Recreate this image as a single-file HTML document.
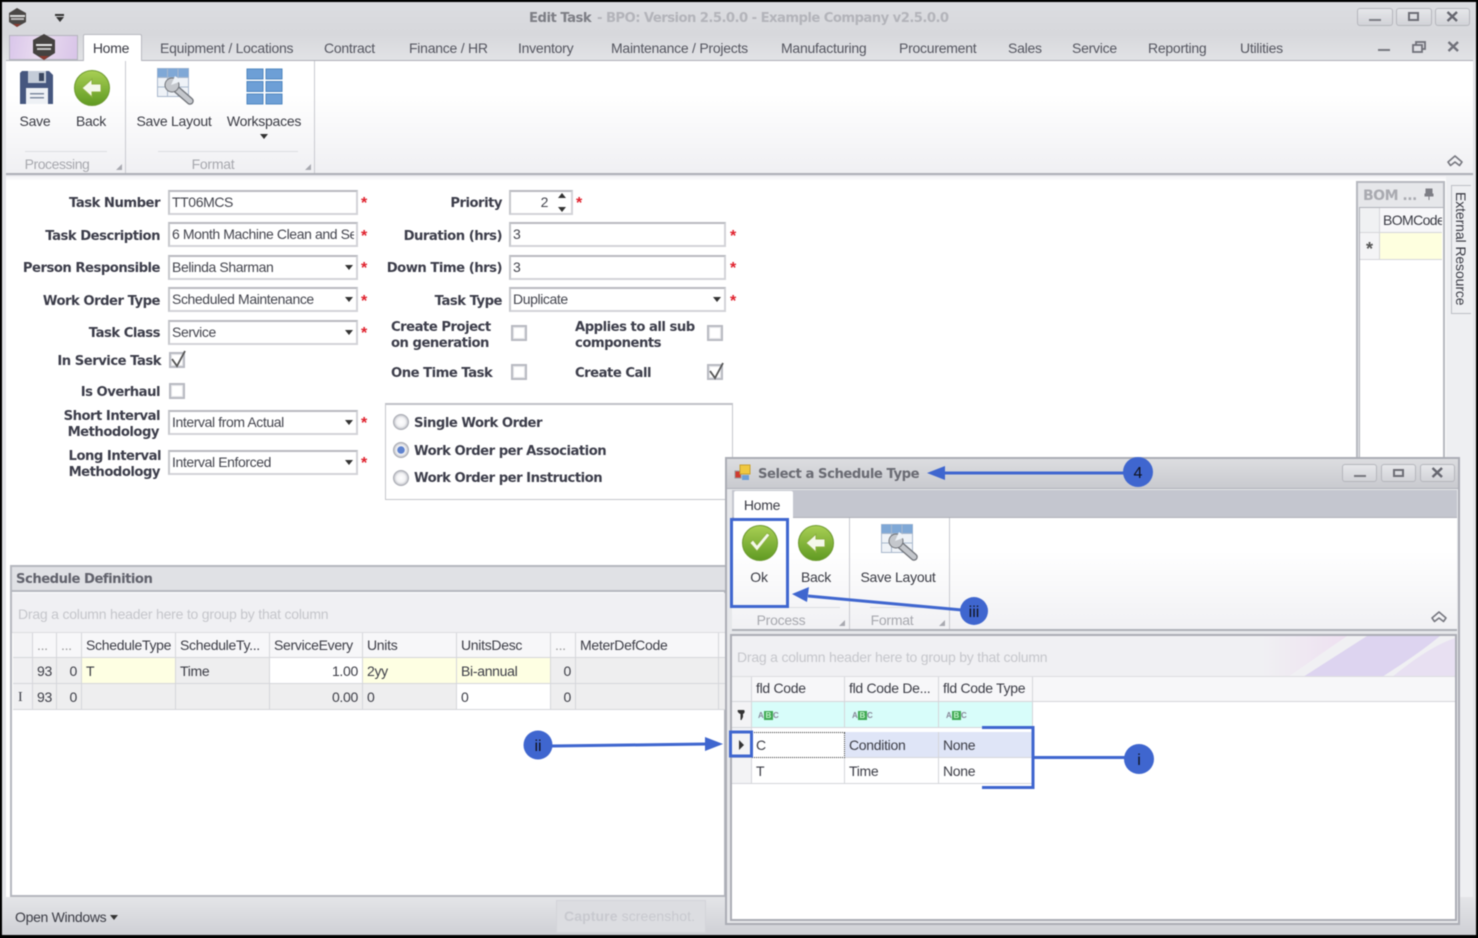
<!DOCTYPE html>
<html><head><meta charset="utf-8"><title>Edit Task</title>
<style>
html,body{margin:0;padding:0;background:#000;width:1478px;height:938px;overflow:hidden}
#a{position:absolute;left:0;top:0;width:1478px;height:938px;overflow:hidden;background:#000;filter:blur(.45px);font-family:"Liberation Sans",sans-serif;font-size:14px;color:#3a3b44}
#a div{position:absolute;box-sizing:border-box}
.t{white-space:nowrap;line-height:16px;height:16px;letter-spacing:-.25px}
.c{text-align:center;transform:translateX(-50%)}
.l{font-family:"DejaVu Sans",sans-serif;font-weight:bold;font-size:13.2px;letter-spacing:-.5px;color:#3c3d4a;text-align:right;white-space:nowrap;line-height:16px;height:16px;margin-top:3px}
.b{font-family:"DejaVu Sans",sans-serif;font-weight:bold;font-size:13.2px;letter-spacing:-.5px;color:#3c3d4a;white-space:nowrap;line-height:16px;height:16px;margin-top:3px}
.i{background:#fff;border:2px solid #d2d3d8;border-top-color:#b9bac0;border-left-color:#c6c7cc;line-height:20px;padding-left:2px;white-space:nowrap;overflow:hidden;letter-spacing:-.4px;color:#44454e}
.d:after{content:"";position:absolute;right:3px;top:8px;border:4.5px solid transparent;border-top:5px solid #333;border-bottom:0}
.s{color:#e0202c;font-size:16px;font-weight:bold;line-height:16px;height:16px;width:10px}
.k{width:16px;height:16px;background:#fff;border:2px solid #b8bac2;box-shadow:inset 0 0 0 1px #e6e7ea}
.g{color:#a7a8ae}
.wb{border:1px solid #b5b6bc;border-radius:3px;background:linear-gradient(#e6e7ea,#d2d3d8)}
.cell{border-right:1px solid #d5d6da;border-bottom:1px solid #d5d6da;line-height:24px;padding:0 4px;white-space:nowrap;overflow:hidden;letter-spacing:-.3px;color:#3c3d46}
svg{position:absolute;overflow:visible}
</style></head><body><div id="a">

<!-- window base -->
<div style="left:2px;top:2px;width:1474px;height:933px;background:#e4e5e9"></div>
<div style="left:2px;top:2px;width:1474px;height:32px;background:linear-gradient(#dcdde1,#d7d8dc)"></div>
<div style="left:2px;top:34px;width:1474px;height:27px;background:linear-gradient(#d7d8dc,#e2e3e6)"></div>
<div style="left:6px;top:60px;width:1467px;height:1px;background:#aeb0b8"></div>

<svg style="left:0;top:0" width="40" height="40" viewBox="0 0 40 40">
<polygon points="17,8 26,13 26,22 17,27 9,22 9,13" fill="#4a4745"/><rect x="10" y="15" width="15" height="2" fill="#ddd"/><rect x="11" y="18" width="13" height="2" fill="#bbb"/><polygon points="13,24 21,24 17,27" fill="#8a3a30"/>
</svg>
<div style="left:55px;top:14px;width:9px;height:2px;background:#333"></div>
<div style="left:56px;top:17px;border:4px solid transparent;border-top:5px solid #333;border-bottom:0"></div>

<div class="t b" style="left:529px;top:8px;color:#7d7e85">Edit Task</div>
<div class="t b g" style="left:597px;top:8px;color:#b3b4ba;letter-spacing:-.56px">- BPO: Version 2.5.0.0 - Example Company v2.5.0.0</div>

<!-- window buttons -->
<div class="wb" style="left:1357px;top:8px;width:36px;height:18px"></div>
<div style="left:1369px;top:19px;width:12px;height:2px;background:#7d7e85"></div>
<div class="wb" style="left:1396px;top:8px;width:36px;height:18px"></div>
<div style="left:1408px;top:12px;width:11px;height:9px;border:2px solid #6d6e76"></div>
<div class="wb" style="left:1435px;top:8px;width:35px;height:18px"></div>
<svg style="left:1446px;top:11px" width="13" height="11"><path d="M1.5 1L11 10M11 1L1.5 10" stroke="#666770" stroke-width="2.4" fill="none"/></svg>

<!-- tabs -->
<div style="left:9px;top:35px;width:69px;height:25px;border:1px solid #b4b5bd;background:linear-gradient(100deg,#d9c6ea,#eadcf0 45%,#d8c4e8)"></div>
<svg style="left:30px;top:33px" width="28" height="28"><polygon points="14,1 25,7 25,20 14,27 3,20 3,7" fill="#454240"/><rect x="6" y="11" width="16" height="2" fill="#e8e8e8"/><rect x="7" y="15" width="14" height="2" fill="#c9c9c9"/><polygon points="9,23 19,23 14,27" fill="#8a3a30"/></svg>
<div style="left:83px;top:34px;width:59px;height:28px;background:#fff;border:1px solid #b8b9c0;border-bottom:0;border-radius:2px 2px 0 0"></div>
<div class="t c" style="left:111px;top:40px">Home</div>
<div class="t" style="left:160px;top:40px;color:#555660">Equipment / Locations</div>
<div class="t" style="left:324px;top:40px;color:#555660">Contract</div>
<div class="t" style="left:409px;top:40px;color:#555660">Finance / HR</div>
<div class="t" style="left:518px;top:40px;color:#555660">Inventory</div>
<div class="t" style="left:611px;top:40px;color:#555660">Maintenance / Projects</div>
<div class="t" style="left:781px;top:40px;color:#555660">Manufacturing</div>
<div class="t" style="left:899px;top:40px;color:#555660">Procurement</div>
<div class="t" style="left:1008px;top:40px;color:#555660">Sales</div>
<div class="t" style="left:1072px;top:40px;color:#555660">Service</div>
<div class="t" style="left:1148px;top:40px;color:#555660">Reporting</div>
<div class="t" style="left:1240px;top:40px;color:#555660">Utilities</div>
<div style="left:1378px;top:49px;width:12px;height:2px;background:#77787f"></div>
<svg style="left:1412px;top:41px" width="14" height="12"><rect x="4" y="1" width="9" height="7" fill="none" stroke="#70717a" stroke-width="1.8"/><rect x="1" y="4" width="9" height="7" fill="#dfe0e4" stroke="#70717a" stroke-width="1.8"/></svg>
<svg style="left:1447px;top:41px" width="13" height="11"><path d="M1.5 1L11 10M11 1L1.5 10" stroke="#70717a" stroke-width="2.4" fill="none"/></svg>

<!-- ribbon -->
<div style="left:6px;top:61px;width:1467px;height:114px;background:linear-gradient(#fff,#fff 30%,#f0f0f3);border-bottom:2px solid #aeb0b7"></div>
<div style="left:125px;top:61px;width:1px;height:112px;background:#c9cad0"></div>
<div style="left:314px;top:61px;width:1px;height:112px;background:#c9cad0"></div>
<div style="left:25px;top:151px;width:82px;height:1px;background:#dcdde1"></div>
<div style="left:158px;top:151px;width:140px;height:1px;background:#dcdde1"></div>
<svg style="left:20px;top:71px" width="33" height="34"><path d="M2 0H29L33 4V33H0V2Z" fill="#46577f"/><path d="M8 0H26V12H8Z" fill="#c4ccd8"/><rect x="19" y="2" width="5" height="8" fill="#3a4660"/><rect x="6" y="17" width="22" height="16" fill="#eef1f5"/><rect x="10" y="22" width="14" height="1.5" fill="#7f8aa0"/><rect x="10" y="26" width="14" height="1.5" fill="#7f8aa0"/></svg>
<svg style="left:74px;top:70px" width="36" height="36"><defs><linearGradient id="gr" x1="0" y1="0" x2="0" y2="1"><stop offset="0" stop-color="#a9cf54"/><stop offset="1" stop-color="#5f9a22"/></linearGradient></defs><circle cx="18" cy="18" r="17.5" fill="url(#gr)" stroke="#6d9a30"/><path d="M8 18L18 9V14H27V22H18V27Z" fill="#f4f8ea" stroke="#8bb040"/></svg>
<svg style="left:157px;top:68px" width="37" height="38"><rect x=".5" y=".5" width="31" height="28" fill="#eef2f7" stroke="#a9b8cc"/><rect x=".5" y=".5" width="31" height="9" fill="#7fa8d6"/><path d="M10.500 1V28M21 1V28M1 9.500H31M1 19H31" stroke="#a9b8cc" fill="none"/><path d="M18 20L33 33" stroke="#6f7278" stroke-width="7.500" stroke-linecap="round"/><path d="M18 20L33 33" stroke="#c4c7cc" stroke-width="5" stroke-linecap="round"/><circle cx="15" cy="17" r="7" fill="#c4c7cc" stroke="#6f7278"/><path d="M14 17L18 8L25 13Z" fill="#eef2f7"/></svg>
<svg style="left:246px;top:68px" width="38" height="38"><g fill="#6d9fd6" stroke="#4f86c0"><rect x="1" y="1" width="16" height="10"/><rect x="20" y="1" width="16" height="10"/><rect x="1" y="13.500" width="16" height="10"/><rect x="20" y="13.500" width="16" height="10"/><rect x="1" y="26" width="16" height="10"/><rect x="20" y="26" width="16" height="10"/></g></svg>
<div class="t c" style="left:35px;top:113px">Save</div>
<div class="t c" style="left:91px;top:113px">Back</div>
<div class="t c" style="left:174px;top:113px">Save Layout</div>
<div class="t c" style="left:264px;top:113px">Workspaces</div>
<div style="left:260px;top:134px;border:4px solid transparent;border-top:5px solid #333;border-bottom:0"></div>
<div class="t c" style="left:57px;top:156px;color:#a7a8ae;letter-spacing:-.45px">Processing</div>
<div class="t c" style="left:213px;top:156px;color:#a7a8ae">Format</div>
<svg style="left:115px;top:163px" width="8" height="8"><path d="M7 1V7H1Z" fill="#a8a9b0"/></svg>
<svg style="left:304px;top:163px" width="8" height="8"><path d="M7 1V7H1Z" fill="#a8a9b0"/></svg>
<svg style="left:1446px;top:154px" width="18" height="14"><path d="M2 8L9 2L16 8L13.500 11.500L9 8L4.500 11.500Z" fill="none" stroke="#777880" stroke-width="1.600" stroke-linejoin="round"/></svg>

<!-- form area -->
<div style="left:6px;top:176px;width:1467px;height:721px;background:#fff"></div>
<div style="left:1446px;top:176px;width:27px;height:721px;background:#eeeff2"></div>
<div style="left:6px;top:176px;width:1440px;height:5px;background:linear-gradient(#f2f2f5,#fff)"></div>

<!-- left labels -->
<div class="l" style="left:0;width:160px;top:193px">Task Number</div>
<div class="l" style="left:0;width:160px;top:226px">Task Description</div>
<div class="l" style="left:0;width:160px;top:258px">Person Responsible</div>
<div class="l" style="left:0;width:160px;top:291px">Work Order Type</div>
<div class="l" style="left:0;width:160px;top:323px">Task Class</div>
<div class="l" style="left:0;width:161px;top:351px">In Service Task</div>
<div class="l" style="left:0;width:160px;top:382px">Is Overhaul</div>
<div class="l" style="left:0;width:160px;top:406px">Short Interval</div>
<div class="l" style="left:0;width:159px;top:422px">Methodology</div>
<div class="l" style="left:0;width:161px;top:446px">Long Interval</div>
<div class="l" style="left:0;width:160px;top:462px">Methodology</div>

<div class="i" style="left:168px;top:190px;width:190px;height:25px">TT06MCS</div>
<div class="i" style="left:168px;top:222px;width:190px;height:25px"><span style="display:block;width:182px;overflow:hidden">6 Month Machine Clean and Service</span></div>
<div class="i d" style="left:168px;top:255px;width:190px;height:25px">Belinda Sharman</div>
<div class="i d" style="left:168px;top:287px;width:190px;height:25px">Scheduled Maintenance</div>
<div class="i d" style="left:168px;top:320px;width:190px;height:25px">Service</div>
<div class="i d" style="left:168px;top:410px;width:190px;height:25px">Interval from Actual</div>
<div class="i d" style="left:168px;top:450px;width:190px;height:25px">Interval Enforced</div>
<div class="s" style="left:361px;top:196px">*</div>
<div class="s" style="left:361px;top:229px">*</div>
<div class="s" style="left:361px;top:261px">*</div>
<div class="s" style="left:361px;top:294px">*</div>
<div class="s" style="left:361px;top:326px">*</div>
<div class="s" style="left:361px;top:416px">*</div>
<div class="s" style="left:361px;top:456px">*</div>

<div class="k" style="left:169px;top:352px"></div>
<svg style="left:169px;top:349px" width="18" height="20"><path d="M3 10L8 17L16 2" fill="none" stroke="#555" stroke-width="1.800"/></svg>
<div class="k" style="left:169px;top:383px"></div>

<!-- right labels -->
<div class="l" style="left:380px;width:122px;top:193px">Priority</div>
<div class="l" style="left:380px;width:122px;top:226px">Duration (hrs)</div>
<div class="l" style="left:380px;width:122px;top:258px">Down Time (hrs)</div>
<div class="l" style="left:380px;width:122px;top:291px">Task Type</div>
<div class="b" style="left:391px;top:317px">Create Project</div>
<div class="b" style="left:391px;top:333px">on generation</div>
<div class="b" style="left:575px;top:317px">Applies to all sub</div>
<div class="b" style="left:575px;top:333px">components</div>
<div class="b" style="left:391px;top:363px">One Time Task</div>
<div class="b" style="left:575px;top:363px">Create Call</div>

<div class="i" style="left:509px;top:190px;width:64px;height:25px;text-align:right;padding-right:23px">2</div>
<div style="left:558px;top:193px;border:4.500px solid transparent;border-bottom:5px solid #333;border-top:0"></div>
<div style="left:558px;top:207px;border:4.500px solid transparent;border-top:5px solid #333;border-bottom:0"></div>
<div class="s" style="left:576px;top:196px">*</div>
<div class="i" style="left:509px;top:222px;width:217px;height:25px">3</div>
<div class="i" style="left:509px;top:255px;width:217px;height:25px">3</div>
<div class="i d" style="left:509px;top:287px;width:217px;height:25px">Duplicate</div>
<div class="s" style="left:730px;top:229px">*</div>
<div class="s" style="left:730px;top:261px">*</div>
<div class="s" style="left:730px;top:294px">*</div>

<div class="k" style="left:511px;top:325px"></div>
<div class="k" style="left:707px;top:325px"></div>
<div class="k" style="left:511px;top:364px"></div>
<div class="k" style="left:707px;top:364px"></div>
<svg style="left:707px;top:361px" width="18" height="20"><path d="M3 10L8 17L16 2" fill="none" stroke="#555" stroke-width="1.800"/></svg>

<div style="left:385px;top:403px;width:348px;height:97px;border:1px solid #c5c6cb;border-top:2px solid #c0c1c7;background:#fff"></div>
<svg style="left:392px;top:413px" width="18" height="74"><defs><radialGradient id="rd"><stop offset="0" stop-color="#fff"/><stop offset=".6" stop-color="#f3f3f5"/><stop offset="1" stop-color="#b9bbc2"/></radialGradient></defs><circle cx="9" cy="9" r="7.500" fill="url(#rd)" stroke="#a9abb3"/><circle cx="9" cy="37" r="7.500" fill="url(#rd)" stroke="#a9abb3"/><circle cx="9" cy="37" r="3.800" fill="#5f83cf"/><circle cx="9" cy="65" r="7.500" fill="url(#rd)" stroke="#a9abb3"/></svg>
<div class="b" style="left:414px;top:413px">Single Work Order</div>
<div class="b" style="left:414px;top:441px">Work Order per Association</div>
<div class="b" style="left:414px;top:468px">Work Order per Instruction</div>

<!-- BOM panel -->
<div style="left:1356px;top:181px;width:89px;height:290px;background:#e6e7ea;border:2px solid #b6b8bf;border-bottom:0"></div>
<div class="b" style="left:1363px;top:185px;color:#a9aab0;font-size:14px">BOM ...</div>
<svg style="left:1424px;top:188px" width="10" height="13"><path d="M2 1H8V6H9V8H1V6H2ZM5 8V12" fill="#7d7e85" stroke="#7d7e85"/></svg>
<div style="left:1359px;top:207px;width:84px;height:264px;background:#fff;border:1px solid #b0b2b9;border-right:0"></div>
<div style="left:1360px;top:208px;width:20px;height:25px;background:#f0f1f3;border-right:1px solid #d5d6da;border-bottom:1px solid #d5d6da"></div>
<div style="left:1380px;top:208px;width:62px;height:25px;background:#f7f7f9;border-bottom:1px solid #d5d6da;overflow:hidden;line-height:24px;padding-left:3px;white-space:nowrap;letter-spacing:-.6px">BOMCode</div>
<div style="left:1360px;top:233px;width:20px;height:27px;background:#f4f4f6;border-right:1px solid #d5d6da;border-bottom:1px solid #d5d6da;line-height:33px;text-align:center;font-size:18px;font-weight:bold;color:#555">*</div>
<div style="left:1380px;top:233px;width:62px;height:27px;background:#feffdf;border-bottom:1px solid #d5d6da"></div>
<div style="left:1451px;top:185px;width:20px;height:129px;background:#eeeff2;border:1px solid #bdbfc6;border-right:0"></div>
<div class="t" style="left:1453px;top:192px;width:16px;height:112px;writing-mode:vertical-rl;line-height:16px;letter-spacing:-.1px;color:#3c3d46">External Resource</div>

<!-- Schedule definition -->
<div style="left:10px;top:565px;width:716px;height:332px;background:#fff;border:2px solid #b5b7be"></div>
<div style="left:12px;top:567px;width:714px;height:25px;background:#e0e1e5;border-bottom:2px solid #b5b7be"></div>
<div class="b" style="left:16px;top:569px;color:#61626c">Schedule Definition</div>
<div style="left:12px;top:593px;width:714px;height:40px;background:#f0f0f3;border-bottom:1px solid #dcdde0"></div>
<div class="t" style="left:18px;top:606px;color:#c5c6cb;letter-spacing:-.21px">Drag a column header here to group by that column</div>

<div class="cell" style="left:13px;top:633px;width:20px;height:25px;background:#f3f3f5"></div>
<div class="cell" style="left:33px;top:633px;width:24px;height:25px;background:#f7f7f9;color:#999">...</div>
<div class="cell" style="left:57px;top:633px;width:25px;height:25px;background:#f7f7f9;color:#999">...</div>
<div class="cell" style="left:82px;top:633px;width:94px;height:25px;background:#f7f7f9">ScheduleType</div>
<div class="cell" style="left:176px;top:633px;width:94px;height:25px;background:#f7f7f9">ScheduleTy...</div>
<div class="cell" style="left:270px;top:633px;width:93px;height:25px;background:#f7f7f9">ServiceEvery</div>
<div class="cell" style="left:363px;top:633px;width:94px;height:25px;background:#f7f7f9">Units</div>
<div class="cell" style="left:457px;top:633px;width:94px;height:25px;background:#f7f7f9">UnitsDesc</div>
<div class="cell" style="left:551px;top:633px;width:25px;height:25px;background:#f7f7f9;color:#999">...</div>
<div class="cell" style="left:576px;top:633px;width:143px;height:25px;background:#f7f7f9">MeterDefCode</div>
<div class="cell" style="left:719px;top:633px;width:7px;height:25px;background:#f7f7f9;border-right:0"></div>

<div class="cell" style="left:13px;top:658px;width:20px;height:26px;background:#f0f0f2"></div>
<div class="cell" style="left:33px;top:658px;width:24px;height:26px;background:#eeeeef;line-height:26px">93</div>
<div class="cell" style="left:57px;top:658px;width:25px;height:26px;background:#eeeeef;text-align:right;line-height:26px">0</div>
<div class="cell" style="left:82px;top:658px;width:94px;height:26px;background:#feffe3;line-height:26px">T</div>
<div class="cell" style="left:176px;top:658px;width:94px;height:26px;background:#eeeeef;line-height:26px">Time</div>
<div class="cell" style="left:270px;top:658px;width:93px;height:26px;background:#fff;text-align:right;line-height:26px">1.00</div>
<div class="cell" style="left:363px;top:658px;width:94px;height:26px;background:#feffe3;line-height:26px">2yy</div>
<div class="cell" style="left:457px;top:658px;width:94px;height:26px;background:#feffe3;line-height:26px">Bi-annual</div>
<div class="cell" style="left:551px;top:658px;width:25px;height:26px;background:#eeeeef;text-align:right;line-height:26px">0</div>
<div class="cell" style="left:576px;top:658px;width:143px;height:26px;background:#eeeeef"></div>
<div class="cell" style="left:719px;top:658px;width:7px;height:26px;background:#eeeeef;border-right:0"></div>

<div class="cell" style="left:13px;top:684px;width:20px;height:26px;background:#f0f0f2;font-family:'Liberation Serif',serif;padding:0 5px;line-height:27px">I</div>
<div class="cell" style="left:33px;top:684px;width:24px;height:26px;background:#eeeeef;line-height:26px">93</div>
<div class="cell" style="left:57px;top:684px;width:25px;height:26px;background:#eeeeef;text-align:right;line-height:26px">0</div>
<div class="cell" style="left:82px;top:684px;width:94px;height:26px;background:#eeeeef"></div>
<div class="cell" style="left:176px;top:684px;width:94px;height:26px;background:#eeeeef"></div>
<div class="cell" style="left:270px;top:684px;width:93px;height:26px;background:#eeeeef;text-align:right;line-height:26px">0.00</div>
<div class="cell" style="left:363px;top:684px;width:94px;height:26px;background:#eeeeef;line-height:26px">0</div>
<div class="cell" style="left:457px;top:684px;width:94px;height:26px;background:#fff;line-height:26px">0</div>
<div class="cell" style="left:551px;top:684px;width:25px;height:26px;background:#eeeeef;text-align:right;line-height:26px">0</div>
<div class="cell" style="left:576px;top:684px;width:143px;height:26px;background:#eeeeef"></div>
<div class="cell" style="left:719px;top:684px;width:7px;height:26px;background:#eeeeef;border-right:0"></div>

<!-- status bar -->
<div style="left:2px;top:897px;width:1474px;height:38px;background:linear-gradient(#e4e5e8,#cfd0d5)"></div>
<div class="t" style="left:15px;top:909px;letter-spacing:-.3px">Open Windows</div>
<div style="left:110px;top:915px;border:4px solid transparent;border-top:5px solid #333;border-bottom:0"></div>
<div style="left:556px;top:900px;width:150px;height:33px;border:1px solid #d3d4d9;background:#dcdde1"></div>
<div class="t" style="left:564px;top:908px;color:#c8c9cf;letter-spacing:.1px"><b>Capture</b> screenshot.</div>

<!-- dialog -->
<div style="left:725px;top:457px;width:735px;height:468px;background:#e6e7ea;border:2px solid #abadb5"></div>
<div style="left:727px;top:459px;width:731px;height:30px;background:linear-gradient(#dcdde0,#c9cacf);border-bottom:1px solid #b0b2ba"></div>
<svg style="left:734px;top:464px" width="18" height="18"><rect x="1" y="7" width="6" height="7" fill="#d03a30" stroke="#999"/><rect x="6" y="1" width="10" height="9" fill="#f0c840" stroke="#c8a030"/><rect x="8" y="11" width="7" height="5" fill="#6d9fd6"/></svg>
<div class="b" style="left:758px;top:464px;color:#6a6b73;letter-spacing:-.45px">Select a Schedule Type</div>
<div class="wb" style="left:1342px;top:464px;width:35px;height:18px"></div>
<div style="left:1354px;top:475px;width:12px;height:2px;background:#77787f"></div>
<div class="wb" style="left:1381px;top:464px;width:35px;height:18px"></div>
<div style="left:1393px;top:469px;width:11px;height:8px;border:2px solid #6d6e76"></div>
<div class="wb" style="left:1420px;top:464px;width:35px;height:18px"></div>
<svg style="left:1431px;top:467px" width="13" height="11"><path d="M1.500 1L11 10M11 1L1.500 10" stroke="#666770" stroke-width="2.400" fill="none"/></svg>

<div style="left:732px;top:490px;width:725px;height:28px;background:#c4c6cf;border-bottom:1px solid #aeb0b8"></div>
<div style="left:734px;top:491px;width:59px;height:27px;background:#fff;border-radius:2px 2px 0 0"></div>
<div class="t c" style="left:762px;top:497px">Home</div>
<div style="left:732px;top:518px;width:725px;height:113px;background:linear-gradient(#fff,#fff 30%,#f1f1f4);border-bottom:2px solid #aeb0b7"></div>
<div style="left:849px;top:518px;width:1px;height:111px;background:#c9cad0"></div>
<div style="left:949px;top:518px;width:1px;height:111px;background:#c9cad0"></div>
<div style="left:740px;top:607px;width:100px;height:1px;background:#dcdde1"></div>
<div style="left:870px;top:607px;width:70px;height:1px;background:#dcdde1"></div>
<svg style="left:742px;top:525px" width="36" height="36"><circle cx="18" cy="18" r="17.500" fill="url(#gr)" stroke="#6d9a30"/><path d="M8 18L15 26L28 10L25 8L15 20L11 15Z" fill="#f4f8ea" stroke="#8bb040" stroke-width=".8"/></svg>
<svg style="left:798px;top:525px" width="36" height="36"><circle cx="18" cy="18" r="17.500" fill="url(#gr)" stroke="#6d9a30"/><path d="M8 18L18 9V14H27V22H18V27Z" fill="#f4f8ea" stroke="#8bb040"/></svg>
<svg style="left:881px;top:524px" width="37" height="38"><rect x=".5" y=".5" width="31" height="28" fill="#eef2f7" stroke="#a9b8cc"/><rect x=".5" y=".5" width="31" height="9" fill="#7fa8d6"/><path d="M10.500 1V28M21 1V28M1 9.500H31M1 19H31" stroke="#a9b8cc" fill="none"/><path d="M18 20L33 33" stroke="#6f7278" stroke-width="7.500" stroke-linecap="round"/><path d="M18 20L33 33" stroke="#c4c7cc" stroke-width="5" stroke-linecap="round"/><circle cx="15" cy="17" r="7" fill="#c4c7cc" stroke="#6f7278"/><path d="M14 17L18 8L25 13Z" fill="#eef2f7"/></svg>
<div class="t c" style="left:759px;top:569px">Ok</div>
<div class="t c" style="left:816px;top:569px">Back</div>
<div class="t c" style="left:898px;top:569px">Save Layout</div>
<div class="t c" style="left:781px;top:612px;color:#a7a8ae">Process</div>
<div class="t c" style="left:892px;top:612px;color:#a7a8ae">Format</div>
<svg style="left:838px;top:619px" width="8" height="8"><path d="M7 1V7H1Z" fill="#a8a9b0"/></svg>
<svg style="left:938px;top:619px" width="8" height="8"><path d="M7 1V7H1Z" fill="#a8a9b0"/></svg>
<svg style="left:1430px;top:610px" width="18" height="14"><path d="M2 8L9 2L16 8L13.500 11.500L9 8L4.500 11.500Z" fill="none" stroke="#777880" stroke-width="1.600" stroke-linejoin="round"/></svg>

<div style="left:730px;top:634px;width:727px;height:287px;background:#fff;border:2px solid #abadb5"></div>
<div style="left:732px;top:636px;width:723px;height:41px;background:#f0f0f3;border-bottom:1px solid #dcdde0;overflow:hidden">
<svg style="left:0;top:0" width="723" height="41"><defs><linearGradient id="pk" x1="0" x2="1"><stop offset="0" stop-color="#f0f0f3"/><stop offset="1" stop-color="#eee0f1"/></linearGradient></defs><path d="M530 0H615L556 41H530Z" fill="url(#pk)"/><path d="M571 41L635 0H708C690 15 670 28 650 41Z" fill="#ddd4f0"/><path d="M660 41C680 25 700 10 723 2V41Z" fill="#e8e0f2"/></svg>
</div>
<div class="t" style="left:737px;top:649px;color:#c5c6cb;letter-spacing:-.21px">Drag a column header here to group by that column</div>

<div class="cell" style="left:732px;top:677px;width:20px;height:25px;background:#f3f3f5"></div>
<div class="cell" style="left:752px;top:677px;width:93px;height:25px;background:#f7f7f9;line-height:23px">fld Code</div>
<div class="cell" style="left:845px;top:677px;width:94px;height:25px;background:#f7f7f9;line-height:23px">fld Code De...</div>
<div class="cell" style="left:939px;top:677px;width:94px;height:25px;background:#f7f7f9;line-height:23px">fld Code Type</div>
<div class="cell" style="left:1033px;top:677px;width:422px;height:25px;background:#f7f7f9;border-right:0"></div>
<div class="cell" style="left:732px;top:702px;width:20px;height:26px;background:#f3f3f5"></div>
<svg style="left:737px;top:709px" width="9" height="12"><path d="M1 1H7C8 2 8 4 6 5V8L4.500 11H3.500V5C1 4 0 2 1 1Z" fill="#333"/></svg>
<div class="cell" style="left:752px;top:702px;width:93px;height:26px;background:#d8fdfa"></div>
<div class="cell" style="left:845px;top:702px;width:94px;height:26px;background:#d8fdfa"></div>
<div class="cell" style="left:939px;top:702px;width:94px;height:26px;background:#d8fdfa"></div>
<div style="left:758px;top:711px;font:bold 8px/10px 'Liberation Sans',sans-serif;color:#889;white-space:nowrap;letter-spacing:.2px">A<span style="background:#3fa853;color:#bff0c8;padding:0 1.500px">B</span>C</div>
<div style="left:852px;top:711px;font:bold 8px/10px 'Liberation Sans',sans-serif;color:#889;white-space:nowrap;letter-spacing:.2px">A<span style="background:#3fa853;color:#bff0c8;padding:0 1.500px">B</span>C</div>
<div style="left:946px;top:711px;font:bold 8px/10px 'Liberation Sans',sans-serif;color:#889;white-space:nowrap;letter-spacing:.2px">A<span style="background:#3fa853;color:#bff0c8;padding:0 1.500px">B</span>C</div>

<div class="cell" style="left:732px;top:728px;width:20px;height:30px;background:#f3f3f5"></div>
<div style="left:739px;top:740px;border:5px solid transparent;border-left:5px solid #333;border-right:0"></div>
<div class="cell" style="left:752px;top:732px;width:93px;height:26px;background:#fff;border:1px dotted #333;padding-left:3px">C</div>
<div class="cell" style="left:845px;top:732px;width:94px;height:26px;background:#dfe5f7;line-height:26px">Condition</div>
<div class="cell" style="left:939px;top:732px;width:94px;height:26px;background:#dfe5f7;line-height:26px">None</div>
<div class="cell" style="left:732px;top:758px;width:20px;height:26px;background:#f3f3f5"></div>
<div class="cell" style="left:752px;top:758px;width:93px;height:26px;background:#fff;line-height:26px">T</div>
<div class="cell" style="left:845px;top:758px;width:94px;height:26px;background:#fff;line-height:26px">Time</div>
<div class="cell" style="left:939px;top:758px;width:94px;height:26px;background:#fff;line-height:26px">None</div>

<!-- annotations -->
<svg style="left:0;top:0;z-index:5" width="1478" height="938" viewBox="0 0 1478 938">
<g fill="none" stroke="#3f66cf" stroke-width="3">
<path d="M945 473H1125"/>
<path d="M552 746L706 744"/>
<path d="M808 596L962 610"/>
<rect x="731.500" y="519.500" width="56" height="87"/>
<rect x="730.500" y="732" width="21" height="24"/>
<path d="M982 727.500H1033V787.500H982M1033 757.500H1126"/>
</g>
<g fill="#3f66cf">
<path d="M927 473L945 466V480Z"/>
<path d="M723 744L705 737V751Z"/>
<path d="M792 594L809 587L807 602Z"/>
<circle cx="1138" cy="472" r="15"/>
<circle cx="538" cy="745" r="14.500"/>
<circle cx="974" cy="611" r="14"/>
<circle cx="1139" cy="759" r="15"/>
</g>
<g font-family="Liberation Sans,sans-serif" font-size="16" fill="#10131f" text-anchor="middle">
<text x="1138" y="478">4</text>
<text x="538" y="751">ii</text>
<text x="974" y="617">iii</text>
<text x="1139" y="765">i</text>
</g>
</svg>
</div></body></html>
